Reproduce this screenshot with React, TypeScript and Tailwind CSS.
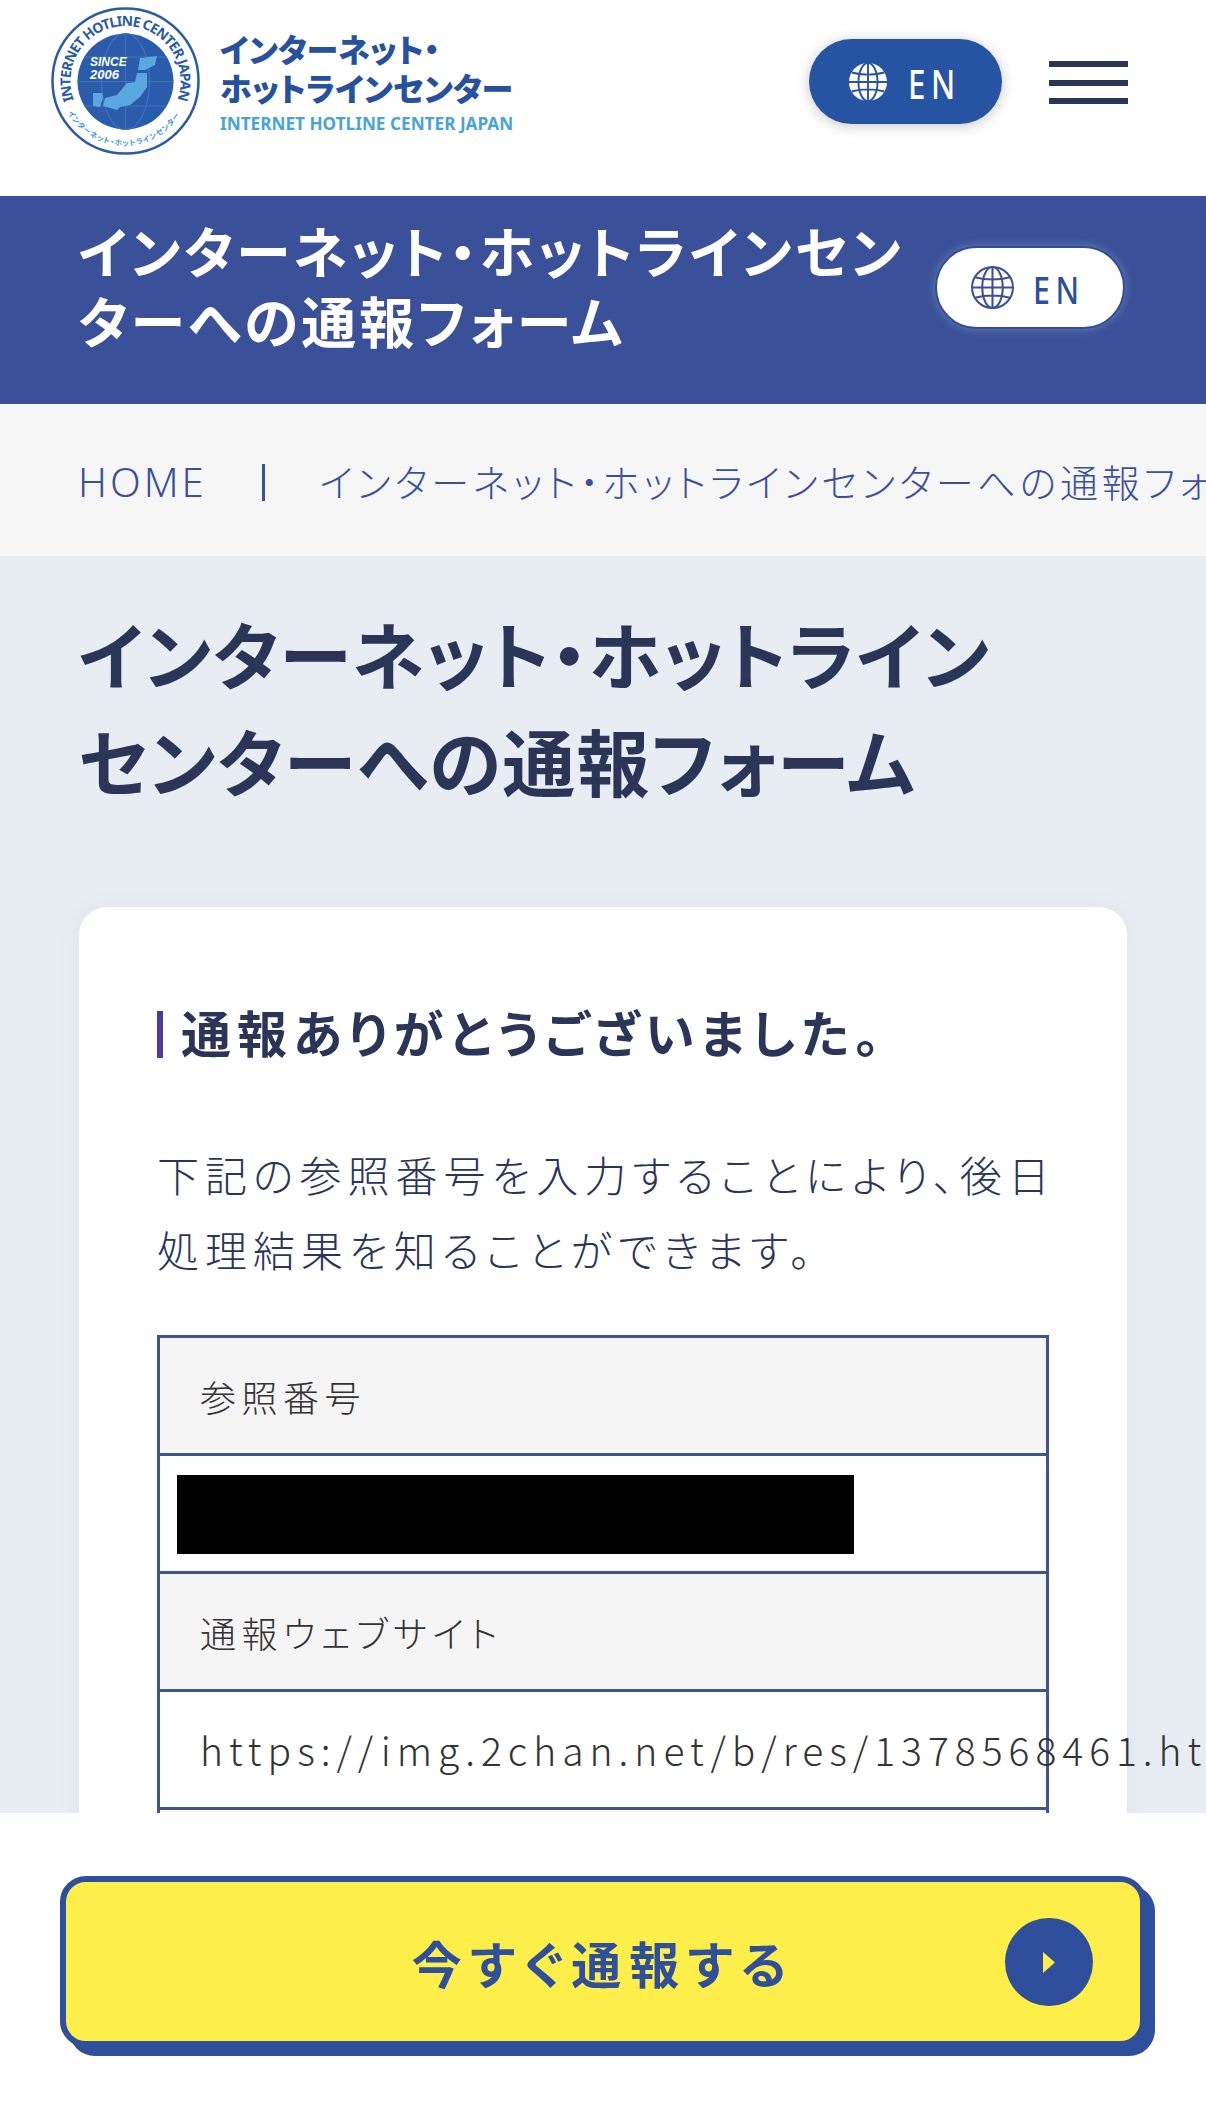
const jp = 'font-["Noto_Sans_CJK_JP","Noto_Sans",sans-serif] [font-feature-settings:"palt"]';

function GlobeIcon({ className, solid }: { className: string; solid?: boolean }) {
  const line = solid ? '#2753a3' : '#3a5199';
  return (
    <svg viewBox="0 0 42 42" className={className}>
      <circle cx="21" cy="21" r="20" fill={solid ? '#ffffff' : 'none'} stroke={solid ? 'none' : line} strokeWidth="2" />
      <g fill="none" stroke={line} strokeWidth="2">
        <ellipse cx="21" cy="21" rx="10" ry="20" />
        <path d="M21 1v40M1 21h40M4 11c10 3 24 3 34 0M4 31c10-3 24-3 34 0" />
      </g>
    </svg>
  );
}

function Emblem() {
  return (
    <svg viewBox="0 0 149 148" className="w-[149px] h-[148px] shrink-0">
      <defs>
        <path id="ringTop" d="M22.900 93A55 55 0 1 1 126.100 93" />
        <path id="ringBottom" d="M17 106A65 65 0 0 0 131 104" />
      </defs>
      <ellipse cx="74.5" cy="74" rx="73" ry="72.500" fill="#fff" stroke="#2a5ba6" strokeWidth="2.500" />
      <circle cx="74.5" cy="74.500" r="48" fill="#2a5cab" />
      <g fill="none" stroke="#3f71bb" strokeWidth="1.2">
        <ellipse cx="74.5" cy="74.500" rx="24" ry="48" />
        <path d="M74.500 26.500v96M26.500 74.500h96M33 50h83M33 99h83" />
      </g>
      <path d="M89 51l17-2-2 9-10 5-7 0z" fill="#59a9e0" />
      <path d="M86 66l10 0 0 14-7 10-10 8-10 2-3 3-14-4 2-8 12-3 10-12 8-1z" fill="#59a9e0" />
      <path d="M42 86l9 0 1 5-3 9-7-1z" fill="#59a9e0" />
      <text x="39" y="59" fill="#fff" fontSize="12" fontWeight="700" fontStyle="italic" fontFamily="'Liberation Sans',sans-serif">SINCE</text>
      <text x="39" y="72" fill="#fff" fontSize="13" fontWeight="700" fontStyle="italic" fontFamily="'Liberation Sans',sans-serif">2006</text>
      <text fill="#2a5ba6" fontSize="14" fontWeight="700" fontFamily="'Noto Sans',sans-serif">
        <textPath href="#ringTop" textLength="211">INTERNET HOTLINE CENTER JAPAN</textPath>
      </text>
      <text fill="#3f9ad6" fontSize="7.500" fontWeight="700" fontFamily="'Noto Sans CJK JP',sans-serif">
        <textPath href="#ringBottom" textLength="134">インターネット・ホットラインセンター</textPath>
      </text>
    </svg>
  );
}

function Row({ label, children }: { label?: string; children?: React.ReactNode }) {
  return (
    <div className={`h-[118px] border-t-[3px] border-[#3f5590] flex items-center ${label ? 'bg-[#f5f5f5]' : 'bg-white'}`}>
      {label && <span className="pl-[40px] text-[36px] tracking-[5.500px] font-light text-[#333]">{label}</span>}
      {children}
    </div>
  );
}

export default function App() {
  return (
    <div className={`w-[1206px] h-[2102px] overflow-hidden flex flex-col bg-white ${jp}`}>
      <header className="h-[196px] shrink-0 flex items-start bg-white">
        <div className="ml-[51px] mt-[7px] flex items-start gap-[20px] w-[758px]">
          <Emblem />
          <div className="pt-[22px] font-black text-[#27519f]">
            <p className="text-[32px] leading-[39px] whitespace-nowrap">インターネット・</p>
            <p className="text-[32px] leading-[39px] whitespace-nowrap">ホットラインセンター</p>
            <p className="mt-[7px] text-[17.200px] leading-[20px] font-bold text-[#49a3da] whitespace-nowrap font-['Noto_Sans',sans-serif]">INTERNET HOTLINE CENTER JAPAN</p>
          </div>
        </div>
        <div className="mt-[39px] w-[193px] h-[85px] rounded-full bg-[#2753a3] shadow-[0_2px_14px_rgba(0,0,0,0.22)] flex items-center pl-[39px] gap-[20px] text-white shrink-0">
          <GlobeIcon solid className="w-[40px] h-[40px]" />
          <span className="inline-block origin-left scale-x-[0.8] pt-[3px] text-[39px] leading-none tracking-[7px] font-medium font-['Noto_Sans',sans-serif]">EN</span>
        </div>
        <div className="mt-[61px] ml-[47px] w-[79px] flex flex-col gap-[12.500px] shrink-0">
          <span className="h-[6px] bg-[#2a3558]" />
          <span className="h-[6px] bg-[#2a3558]" />
          <span className="h-[6px] bg-[#2a3558]" />
        </div>
      </header>

      <div className="h-[208px] shrink-0 bg-[#3a5199] flex items-start">
        <h2 className="ml-[78px] mt-[18px] w-[857px] text-[55px] leading-[70px] tracking-[3px] font-semibold text-white whitespace-nowrap">
          インターネット・ホットラインセン
          <br />
          ターへの通報フォーム
        </h2>
        <div className="mt-[50px] w-[190px] h-[83px] rounded-full bg-white border-2 border-[#2f4d96] shadow-[0_0_10px_rgba(255,255,255,0.25)] flex items-center pl-[34px] gap-[19px] text-[#27519f] shrink-0">
          <GlobeIcon className="w-[43px] h-[43px]" />
          <span className="inline-block origin-left scale-x-[0.8] pt-[3px] text-[38px] leading-none tracking-[7px] font-medium font-['Noto_Sans',sans-serif]">EN</span>
        </div>
      </div>

      <nav className="h-[152px] shrink-0 bg-[#f6f6f6] flex items-center pl-[78px] whitespace-nowrap text-[#3a5199]">
        <span className="pt-[4px] text-[40px] tracking-[3px] font-light font-['Noto_Sans',sans-serif] shrink-0">HOME</span>
        <span className="ml-[55px] mt-[4px] w-[3px] h-[37px] bg-[#3a5199] shrink-0" />
        <span className="ml-[55px] text-[38px] tracking-[3.800px] font-light shrink-0">インターネット・ホットラインセンターへの通報フォーム</span>
      </nav>

      <main className="h-[1257px] shrink-0 overflow-hidden bg-[#e8edf3]">
        <h1 className="ml-[78px] mt-[43px] text-[73px] leading-[107px] tracking-[1.200px] font-bold text-[#2a3558] whitespace-nowrap">
          インターネット・ホットライン
          <br />
          センターへの通報フォーム
        </h1>
        <section className="mx-[79px] mt-[94px] rounded-[28px] bg-white shadow-[0_0_24px_rgba(40,50,90,0.05)] px-[78px] pt-[104px] pb-[80px]">
          <h3 className="h-[47px] border-l-[6px] border-[#4f3a9e] pl-[18px] flex items-center text-[50px] leading-none font-bold text-[#2a3558] whitespace-nowrap">
            <span className="mb-[8px] tracking-[6px]">通報ありがとうございました。</span>
          </h3>
          <p className="mt-[78px] text-[42px] leading-[75px] tracking-[6px] font-light text-[#2a3558] whitespace-nowrap">
            下記の参照番号を入力することにより、後日
            <br />
            処理結果を知ることができます。
          </p>
          <div className="mt-[49px] w-[892px] border-x-[3px] border-[#3f5590]">
            <Row label="参照番号" />
            <Row>
              <div className="ml-[17px] mt-[2px] w-[677px] h-[79px] bg-black" />
            </Row>
            <Row label="通報ウェブサイト" />
            <Row>
              <span className="pl-[40px] text-[39px] tracking-[6px] font-light text-[#333] whitespace-nowrap">
                https://img.2chan.net/b/res/1378568461.html
              </span>
            </Row>
            <Row />
          </div>
        </section>
      </main>

      <footer className="flex-1 bg-white pt-[63px] pl-[60px]">
        <button className="relative w-[1086px] h-[171px] rounded-[26px] border-[6px] border-[#2f4f9c] bg-[#fdee49] shadow-[9px_9px_0_#2f4f9c] flex items-center justify-center">
          <span className="text-[50px] leading-none tracking-[8px] font-bold text-[#2f4f9c]">今すぐ通報する</span>
          <span className="absolute right-[47px] top-[36px] w-[88px] h-[88px] rounded-full bg-[#2f4f9c] flex items-center justify-center">
            <svg viewBox="0 0 12 21" className="w-[12px] h-[21px]">
              <path d="M0 0l12 10.500L0 21z" fill="#fdee49" />
            </svg>
          </span>
        </button>
      </footer>
    </div>
  );
}
